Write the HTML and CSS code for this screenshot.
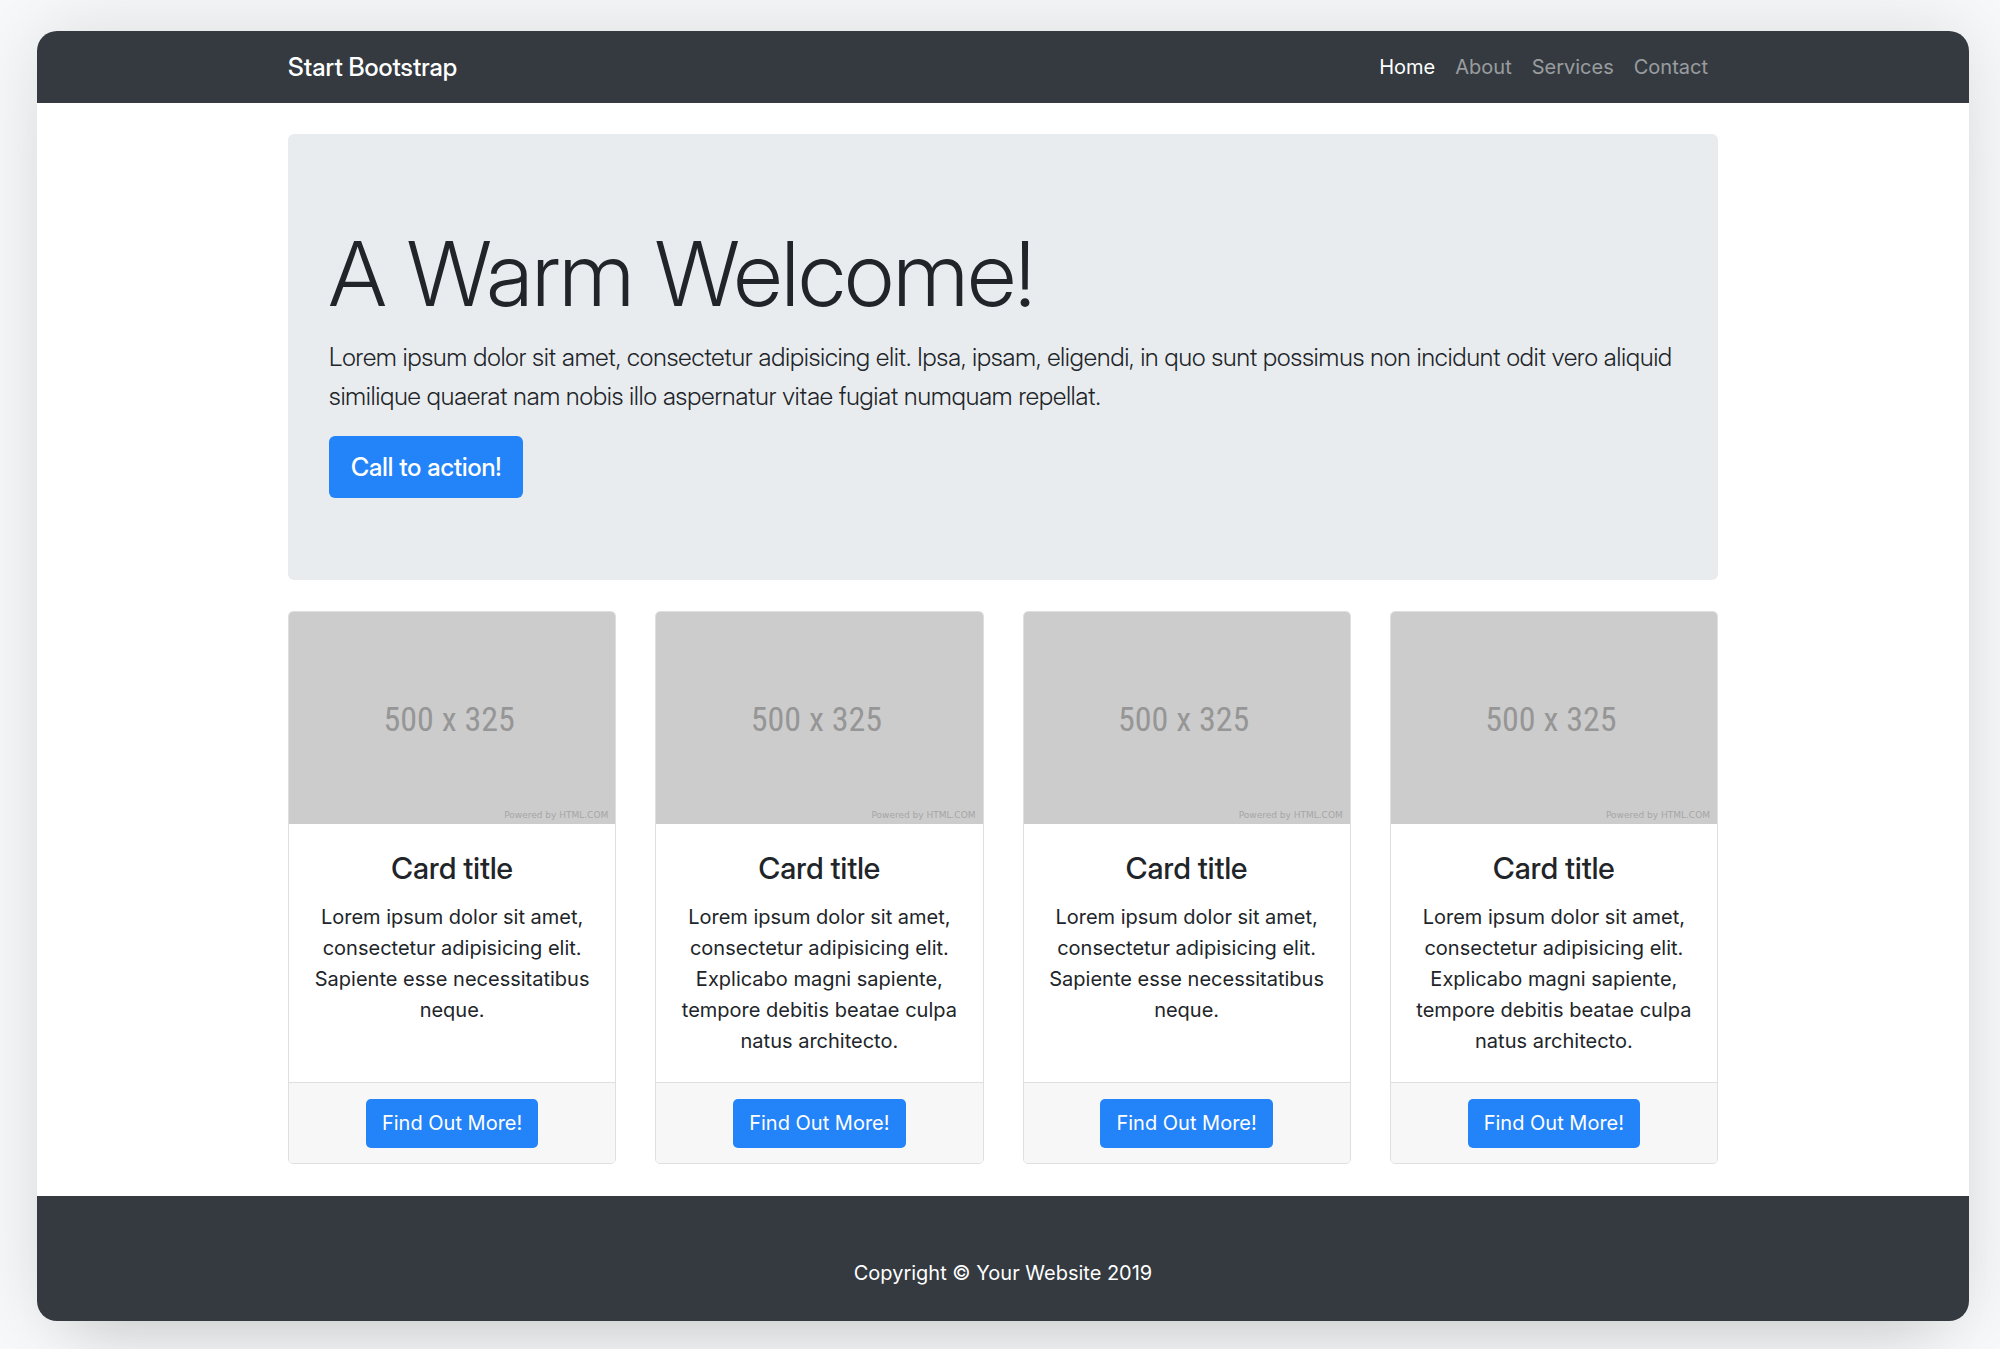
FILE: index.html
```html
<!DOCTYPE html>
<html lang="en">
<head>
<meta charset="utf-8">
<meta name="viewport" content="width=device-width, initial-scale=1">
<title>Start Bootstrap</title>
<link rel="stylesheet" href="styles.css">
</head>
<body>
<div class="window">
  <header class="navbar">
    <div class="container navbar-inner">
      <a class="brand" href="#">Start Bootstrap</a>
      <nav class="nav">
        <a class="nav-link active" href="#">Home</a>
        <a class="nav-link" href="#">About</a>
        <a class="nav-link" href="#">Services</a>
        <a class="nav-link" href="#">Contact</a>
      </nav>
    </div>
  </header>

  <main class="container content">
    <section class="hero">
      <h1 class="hero-title">A Warm Welcome!</h1>
      <p class="lead">Lorem ipsum dolor sit amet, consectetur adipisicing elit. Ipsa, ipsam, eligendi, in quo sunt possimus non incidunt odit vero aliquid similique quaerat nam nobis illo aspernatur vitae fugiat numquam repellat.</p>
      <button class="btn btn-lg" type="button">Call to action!</button>
    </section>

    <section class="cards">
      <article class="card">
        <div class="thumb"><span class="thumb-size">500 x 325</span><span class="thumb-credit">Powered by HTML.COM</span></div>
        <div class="card-body">
          <h2 class="card-title">Card title</h2>
          <p class="card-text">Lorem ipsum dolor sit amet, consectetur adipisicing elit. Sapiente esse necessitatibus neque.</p>
        </div>
        <div class="card-footer"><button class="btn" type="button">Find Out More!</button></div>
      </article>
      <article class="card">
        <div class="thumb"><span class="thumb-size">500 x 325</span><span class="thumb-credit">Powered by HTML.COM</span></div>
        <div class="card-body">
          <h2 class="card-title">Card title</h2>
          <p class="card-text">Lorem ipsum dolor sit amet, consectetur adipisicing elit. Explicabo magni sapiente, tempore debitis beatae culpa natus architecto.</p>
        </div>
        <div class="card-footer"><button class="btn" type="button">Find Out More!</button></div>
      </article>
      <article class="card">
        <div class="thumb"><span class="thumb-size">500 x 325</span><span class="thumb-credit">Powered by HTML.COM</span></div>
        <div class="card-body">
          <h2 class="card-title">Card title</h2>
          <p class="card-text">Lorem ipsum dolor sit amet, consectetur adipisicing elit. Sapiente esse necessitatibus neque.</p>
        </div>
        <div class="card-footer"><button class="btn" type="button">Find Out More!</button></div>
      </article>
      <article class="card">
        <div class="thumb"><span class="thumb-size">500 x 325</span><span class="thumb-credit">Powered by HTML.COM</span></div>
        <div class="card-body">
          <h2 class="card-title">Card title</h2>
          <p class="card-text">Lorem ipsum dolor sit amet, consectetur adipisicing elit. Explicabo magni sapiente, tempore debitis beatae culpa natus architecto.</p>
        </div>
        <div class="card-footer"><button class="btn" type="button">Find Out More!</button></div>
      </article>
    </section>
  </main>

  <footer class="footer">
    <p class="copyright">Copyright © Your Website 2019</p>
  </footer>
</div>
</body>
</html>
```

FILE: styles.css
```css
*,
*::before,
*::after {
  box-sizing: border-box;
}

body {
  margin: 0;
  padding: 31px 31px 29px 37px;
  background: #f8f9fb;
  color: #212529;
  font-family: Inter, "Liberation Sans", sans-serif;
  font-size: 20px;
  line-height: 31px;
}

h1,
h2,
p {
  margin: 0;
}

a {
  color: inherit;
  text-decoration: none;
}

.window {
  overflow: hidden;
  background: #fff;
  border-radius: 20px;
  box-shadow:
    0 0 80px rgba(0, 0, 0, 0.12),
    0 50px 60px -40px rgba(0, 0, 0, 0.12);
}

.container {
  width: 100%;
  max-width: 1430px;
  margin: 0 auto;
}

.brand,
.hero-title,
.lead,
.card-title {
  font-family: "Inter Display", Inter, sans-serif;
}

/* Top bar */
.navbar {
  background: #343a40;
  color: #fff;
}

.navbar-inner {
  display: flex;
  align-items: center;
  justify-content: space-between;
  min-height: 72px;
}

.brand {
  font-size: 25px;
  font-weight: 500;
}

.nav {
  display: flex;
}

.nav-link {
  padding: 10px;
  color: rgba(255, 255, 255, 0.5);
}

.nav-link.active {
  color: #fff;
}

/* Welcome panel */
.content {
  display: flex;
  flex-direction: column;
  gap: 31px;
  padding: 31px 0 32px;
}

.hero {
  padding: 84px 41px 82px;
  background: #e9ecef;
  border-radius: 6px;
}

.hero-title {
  margin-bottom: 8px;
  font-size: 90px;
  font-weight: 300;
  line-height: 112px;
}

.lead {
  margin-bottom: 20px;
  font-size: 25px;
  font-weight: 300;
  line-height: 39px;
}

.btn {
  display: inline-block;
  height: 49px;
  padding: 0 16px;
  border: 0;
  border-radius: 5px;
  background: #2383f8;
  color: #fff;
  font-size: 20px;
  font-family: inherit;
  line-height: 31px;
  cursor: pointer;
}

.btn.btn-lg {
  display: block;
  height: 62px;
  padding: 0 22px;
  border-radius: 6px;
  font-family: "Inter Display", Inter, sans-serif;
  font-size: 25px;
  font-weight: 500;
}

/* Cards */
.cards {
  display: grid;
  grid-template-columns: repeat(4, 1fr);
  gap: 39px;
}

.card {
  display: flex;
  flex-direction: column;
  overflow: hidden;
  border: 1px solid #dfdfdf;
  border-radius: 5px;
  text-align: center;
}

.thumb {
  position: relative;
  display: flex;
  align-items: center;
  justify-content: center;
  padding: 2px 6px 0 0;
  aspect-ratio: 500 / 325;
  background: #ccc;
  color: #969696;
}

.thumb-size {
  font-family: "Roboto Condensed", "Liberation Sans", sans-serif;
  font-size: 34px;
}

.thumb-credit {
  position: absolute;
  right: 7px;
  bottom: 3px;
  color: #a6a6a6;
  font-family: "DejaVu Sans", sans-serif;
  font-size: 9px;
  line-height: 12px;
}

.card-body {
  flex: 1;
  padding: 26px 24px 25px;
}

.card-title {
  margin-bottom: 15px;
  font-size: 30px;
  font-weight: 500;
  line-height: 37px;
}

.card-footer {
  display: flex;
  justify-content: center;
  padding: 16px 16px 15px;
  border-top: 1px solid #dfdfdf;
  background: #f7f7f7;
}

/* Page footer */
.footer {
  padding: 62px 20px 32px;
  background: #343a40;
  color: #fff;
  text-align: center;
}
```
